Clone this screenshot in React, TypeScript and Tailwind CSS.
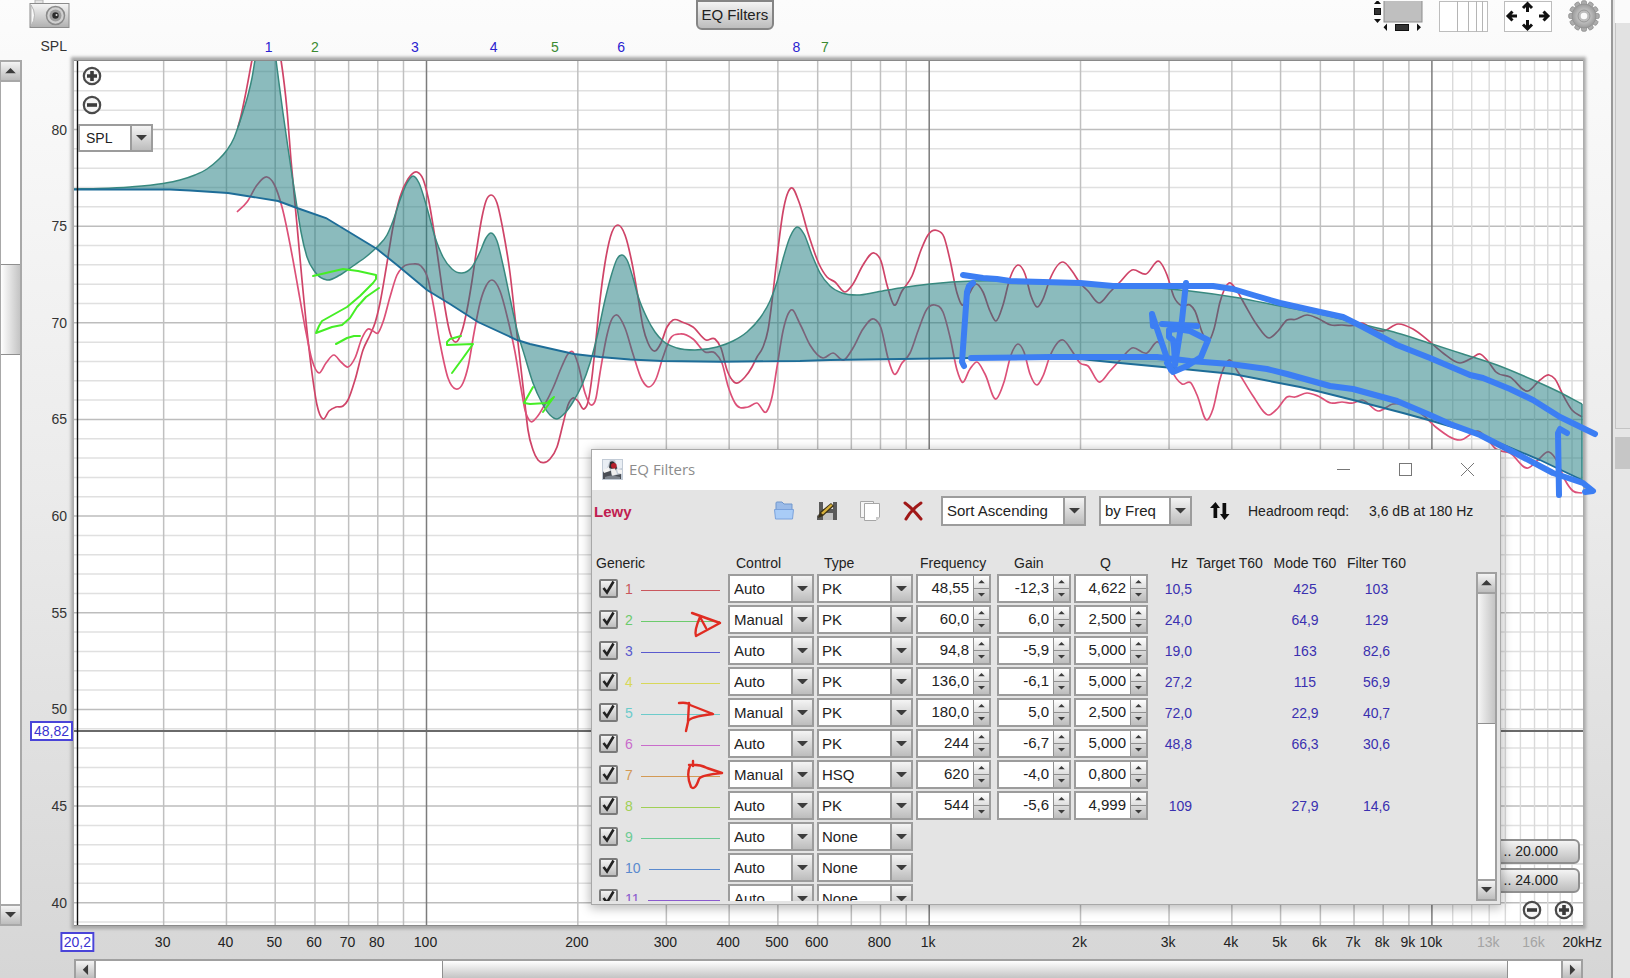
import type { ReactNode } from 'react';

// Plot area in drawing units; every trace below is listed in the same units.
const PLOT = { x: 74, y: 60, w: 1509, h: 866 };
const VIEW_BOX = `${PLOT.x} ${PLOT.y} ${PLOT.w} ${PLOT.h}`;

const freqX = (f: number) => 426.5 + 502.7 * (Math.log10(f) - 2);
const splY = (v: number) => 129.5 + (80 - v) * 19.33;
const leftPct = (f: number) => `${((freqX(f) - PLOT.x) / PLOT.w) * 100}%`;
const topPct = (v: number) => `${((splY(v) - PLOT.y) / PLOT.h) * 100}%`;

type Point = [number, number];

const parse = (s: string): Point[] =>
  s.trim().split(/\s+/).map((p) => p.split(',').map(Number) as Point);

// Cubic curve through points with rising x, with parabolic tangents
function trace(points: Point[]) {
  const slope = points.slice(1).map((p, i) => (p[1] - points[i][1]) / (p[0] - points[i][0]));
  const tangent = points.map((p, i) => {
    if (i === 0) return slope[0];
    if (i === points.length - 1) return slope[i - 1];
    const before = p[0] - points[i - 1][0];
    const after = points[i + 1][0] - p[0];
    return (after * slope[i - 1] + before * slope[i]) / (before + after);
  });
  let d = `M${points[0][0]} ${points[0][1]}`;
  for (let i = 1; i < points.length; i++) {
    const [x0, y0] = points[i - 1];
    const [x1, y1] = points[i];
    const third = (x1 - x0) / 3;
    d += `C${x0 + third} ${y0 + third * tangent[i - 1]} ${x1 - third} ${y1 - third * tangent[i]} ${x1} ${y1}`;
  }
  return d;
}

const response = parse(`
  74,189 100,188.5 130,187 163,183.5 180,180 195,175 207,169 218,160 227,150 234,138 238,127 243,112 248,95 252,78
  255,60 260,35 267,20 273,40 276,60 279,83 283,113 288,148 292,175 297,207 301,232 307,257 315,272 327,280 340,275
  353,266 367,256 377,247 387,235 393,221 400,200 407,183 413,176 419,183 427,208 435,237 443,257 452,269 462,273
  472,267 480,252 486,238 491,233 497,241 503,265 510,298 517,330 525,357 533,383 542,403 550,415 557,419 565,413
  573,402 582,385 590,363 597,337 605,300 612,273 617,259 622,255 627,260 633,278 638,296 647,318 655,332 663,341
  677,348 695,350 717,347 733,341 747,332 760,318 770,301 777,282 783,259 790,237 797,227 804,234 812,255 820,273
  830,286 842,293 857,295 877,292 900,288 930,284 973,281 1010,281 1080,283 1130,286 1190,291 1233,297 1280,306
  1320,314 1373,327 1397,333 1432,344 1463,354 1497,365 1533,380 1557,391 1582,404`);

const target = parse(`
  74,189.5 120,189.5 170,189.5 190,190.5 228,193 250,196.5 278,201 297,208 326,218 377,249 397,265 427,290 450,304
  478,322 517,340 530,344 574,354 600,357 630,359.5 662,361 720,361.7 800,361 830,360 900,359 973,358 1030,358
  1080,359 1120,363 1173,368 1233,374 1300,387 1317,391 1353,400 1403,413 1432,421 1480,435 1540,460 1582,480`);

const measured = parse(`
  238,127 240,120 245,97 252,60 257,35 266,15 276,35 281,60 287,110 291,160 297,225 302,280 308,340 312,373 317,405
  323,419 329,411 336,407 343,406 348,400 355,380 363,350 370,335 375,323 380,303 387,263 393,227 400,197 408,179
  417,172 423,179 428,197 435,238 440,273 445,308 450,333 456,342 462,331 467,310 472,281 477,247 482,217 486,201
  491,195 497,203 503,230 510,273 515,317 520,360 524,395 528,430 533,450 538,460 543,462.7 550,459 557,447 563,424
  568,405 573,398 578,401 584,409 588,402 592,377 595,349 600,300 605,263 612,232 618,225 625,235 632,263 638,297
  643,327 648,343 655,351 661,343 667,327 673,320 682,322 693,327 706,340 715,339 721,348 727,370 734,382 745,377
  752,367 757,357 763,347 768,330 773,293 778,249 783,212 791,188 799,202 808,233 819,264 827,277 835,282 845,292
  853,284 863,265 874,253 881,261 887,285 894,305 902,291 912,276 921,250 928,235 937,230.500 944,237 950,260 957,293
  962,305 968,296 976,284 983,292 990,311 996,321 1003,305 1010,278 1018,265 1025,274 1031,296 1037,307 1043,299
  1050,279 1063,262 1072,271 1080,283 1088,291 1099,303 1110,292 1120,282 1132,270 1146,274 1160,262 1167,275
  1174,297 1182,306 1190,305 1195,311 1202,332 1208,342 1214,329 1220,302 1229,283 1237,291 1245,305 1257,325
  1269,338 1278,331 1287,320 1295,319.500 1307,315 1318,318.500 1331,325 1342,325 1353,325.500 1362,323 1373,329 1383,331
  1398,324 1413,329 1430,342 1443,353 1460,363 1472,358 1480,354 1487,360 1496,372 1510,377 1528,391 1540,380
  1549,375 1555,379 1563,395 1572,410 1582,417`);

const predicted = parse(`
  237,212 247,202 257,185 267,177 274,184 282,207 293,260 298,288 305,327 312,360 319,373 326,363 334,355 341,362
  348,367 355,358 362,338 368,329 373,331 378,333 383,322 390,297 397,275 403,267 413,264 421,266 428,279 433,303
  440,343 448,378 456,389 463,383 468,367 474,333 480,303 486,286 492,280 500,291 508,320 515,352 521,388 525,410
  530,421 537,417 545,404 553,388 562,366 568,354 573,352 578,364 585,393 591,405 596,398 600,373 607,335 611,321
  616,315 625,328 633,354 642,380 649,387 656,379 663,357 670,339 680,334 693,339 705,352 715,353 722,363 728,386
  735,403 748,407 757,403 767,411 772,397 777,367 783,331 791,310 800,324 810,345 823,358 833,353 844,360 853,348
  863,329 874,319 881,328 888,358 894,374 902,363 910,353 918,331 927,309 935,305 943,312 950,337 957,370 962,382
  970,369 977,362 985,374 996,399 1004,382 1011,355 1018,344 1024,352 1030,374 1037,385 1043,376 1050,356 1063,340
  1072,351 1080,363 1088,366 1099,382 1110,371 1120,360 1132,348 1147,353 1158,342 1163,347 1171,369 1182,384
  1191,383 1197,395 1207,420 1213,409 1220,379 1229,360 1238,372 1253,396 1269,415 1278,408 1287,397 1295,397
  1307,393 1318,396 1331,403 1342,402 1353,403 1362,400 1378,411 1393,404 1410,407 1423,415 1437,428 1460,440
  1480,432 1488,440 1496,449 1510,453 1528,468 1538,460 1549,452 1557,461 1565,480 1573,491 1582,493`);

const greenMarks = [
  '313,276 343,269 358,271 376,275 376,279 373,283 360,296 347,307 322,321 319,326 316,333 332,327 342,325 350,318 357,307 366,297 379,288',
  '336,344 347,338 354,336 360,336',
  '461,336 450,339 447,342 447,345 473,344 463,358 452,373',
  '533,387 524,403 530,404 547,403 554,397 543,412',
];

const blueMarks = [
  '963,275 983,278 997,279 1010,281 1080,283 1113,286 1213,286 1233,289 1253,295 1280,303 1320,312 1343,317 1363,327 1380,336 1397,345 1430,358 1470,375 1483,378 1510,389 1533,400 1560,417 1595,434',
  '971,358 1050,357 1157,357 1190,361 1230,364 1267,369 1287,374 1330,386 1353,389 1397,401 1430,415 1450,424 1480,435 1517,454 1553,473 1583,483 1593,491 1585,492',
  '973,283 969,286 967,292 962,362 964,366',
  '1567,433 1560,429 1558,433 1559,495',
  '1186,283 1182,320 1175,365',
  '1152,314 1153,326 M1152,314 1171,370',
  '1162,324 1197,326',
  '1175,362 1174,347 1173,340 1169,337 1169,330 1177,329 1190,331 1208,340 1201,357 1187,366 1173,372 1167,363',
];

// marks drawn over the filter window, relative to its top left corner
const redMarks = [
  'M101 164 L129 174 L105 187 Q103 182 109 168 L115 179',
  'M88 254 Q97 253 99 256 L122 265 Q97 268 97 273 L95 282 M98 254 L97 272',
  'M102 312 L102 317 M98 316 Q108 315 116 319 L131 324 Q110 326 108 330 Q104 342 100 338 Q95 326 99 317',
];

const freqLabels: [number, string][] = [
  [30, '30'], [40, '40'], [50, '50'], [60, '60'], [70, '70'], [80, '80'], [100, '100'], [200, '200'],
  [300, '300'], [400, '400'], [500, '500'], [600, '600'], [800, '800'], [1000, '1k'], [2000, '2k'],
  [3000, '3k'], [4000, '4k'], [5000, '5k'], [6000, '6k'], [7000, '7k'], [8000, '8k'], [9000, '9k'],
  [10000, '10k'], [13000, '13k'], [16000, '16k'], [20000, '20kHz'],
];
const splLabels = [80, 75, 70, 65, 60, 55, 50, 45, 40];

const decades = [10, 100, 1000];
const gridFreqs = decades
  .flatMap((d) => [2, 3, 4, 5, 6, 7, 8, 9, 10].map((n) => n * d))
  .filter((f) => f > 20.2);
const fineFreqs = [11, 12, 13, 14, 15, 16, 17, 18, 19].map((n) => n * 1000);
const gridSpls = Array.from({ length: 45 }, (_, i) => 39 + i);

const filters = [
  { n: 1, color: '#c9575d', control: 'Auto', type: 'PK', freq: '48,55', gain: '-12,3', q: '4,622', hz: '10,5', mode: '425', t60: '103' },
  { n: 2, color: '#6ccb6c', control: 'Manual', type: 'PK', freq: '60,0', gain: '6,0', q: '2,500', hz: '24,0', mode: '64,9', t60: '129' },
  { n: 3, color: '#5a5ace', control: 'Auto', type: 'PK', freq: '94,8', gain: '-5,9', q: '5,000', hz: '19,0', mode: '163', t60: '82,6' },
  { n: 4, color: '#d8d85a', control: 'Auto', type: 'PK', freq: '136,0', gain: '-6,1', q: '5,000', hz: '27,2', mode: '115', t60: '56,9' },
  { n: 5, color: '#6ccbcb', control: 'Manual', type: 'PK', freq: '180,0', gain: '5,0', q: '2,500', hz: '72,0', mode: '22,9', t60: '40,7' },
  { n: 6, color: '#c96ccb', control: 'Auto', type: 'PK', freq: '244', gain: '-6,7', q: '5,000', hz: '48,8', mode: '66,3', t60: '30,6' },
  { n: 7, color: '#d39a55', control: 'Manual', type: 'HSQ', freq: '620', gain: '-4,0', q: '0,800', hz: '', mode: '', t60: '' },
  { n: 8, color: '#a0d055', control: 'Auto', type: 'PK', freq: '544', gain: '-5,6', q: '4,999', hz: '109', mode: '27,9', t60: '14,6' },
  { n: 9, color: '#6ccb94', control: 'Auto', type: 'None' },
  { n: 10, color: '#5a8ace', control: 'Auto', type: 'None' },
  { n: 11, color: '#8a5ace', control: 'Auto', type: 'None' },
];

const filterMarkers = [
  { n: 1, f: 48.55, manual: false },
  { n: 2, f: 60, manual: true },
  { n: 3, f: 94.8, manual: false },
  { n: 4, f: 136, manual: false },
  { n: 5, f: 180, manual: true },
  { n: 6, f: 244, manual: false },
  { n: 8, f: 544, manual: false },
  { n: 7, f: 620, manual: true },
];

const buttonFace = 'bg-gradient-to-b from-[#f4f4f4] to-[#bdbdbd]';

function Triangle({ dir, small }: { dir: 'up' | 'down' | 'left' | 'right'; small?: boolean }) {
  const turn = { up: 'rotate-180', down: '', left: 'rotate-90', right: '-rotate-90' }[dir];
  return (
    <svg viewBox="0 0 12 6" className={`${small ? 'w-[7px]' : 'w-[11px]'} ${turn}`} aria-hidden>
      <path d="M0 0H12L6 6Z" fill="#3c3c3c" />
    </svg>
  );
}

function Combo({ label, value, className, textClass = 'pl-1' }: {
  label: string;
  value: string;
  className: string;
  textClass?: string;
}) {
  return (
    <div className={`flex border-2 border-[#9c9c9c] bg-white ${className}`}>
      <select
        aria-label={label}
        className={`min-w-0 flex-1 appearance-none bg-white text-[#222] outline-none ${textClass}`}
        defaultValue={value}
      >
        <option>{value}</option>
      </select>
      <span className={`pointer-events-none flex w-[21px] shrink-0 items-center justify-center border-l-2 border-[#9c9c9c] ${buttonFace}`}>
        <Triangle dir="down" />
      </span>
    </div>
  );
}

function Spinner({ label, value, className }: { label: string; value: string; className: string }) {
  return (
    <div className={`flex h-[29px] border-2 border-[#9c9c9c] bg-white ${className}`}>
      <input
        aria-label={label}
        defaultValue={value}
        className="min-w-0 flex-1 bg-white pr-1 text-right text-[15px] text-[#222] outline-none"
      />
      <div className="flex w-4 shrink-0 flex-col border-l border-[#8f8f8f]">
        <button aria-label={`Increase ${label}`} className="flex flex-1 items-center justify-center border-b border-[#8f8f8f] bg-gradient-to-b from-white to-[#dedede]">
          <Triangle dir="up" small />
        </button>
        <button aria-label={`Decrease ${label}`} className="flex flex-1 items-center justify-center bg-gradient-to-b from-[#dadada] to-[#bdbdbd]">
          <Triangle dir="down" small />
        </button>
      </div>
    </div>
  );
}

function ZoomButton({ label, plus }: { label: string; plus?: boolean }) {
  return (
    <button aria-label={label} className="block">
      <svg viewBox="0 0 20 20" className="size-5">
        <circle cx="10" cy="10" r="8.2" fill="#f4f4f4" stroke="#4a4a4a" strokeWidth="2.2" />
        <path d={plus ? 'M5 10H15M10 5V15' : 'M5 10H15'} stroke="#3a3a3a" strokeWidth="3.6" />
      </svg>
    </button>
  );
}

function IconButton({ label, className = '', children }: { label: string; className?: string; children: ReactNode }) {
  return (
    <button aria-label={label} className={`block shrink-0 ${className}`}>
      {children}
    </button>
  );
}

function CameraIcon() {
  return (
    <svg viewBox="0 0 42 29" className="h-[29px] w-[42px]">
      <defs>
        <linearGradient id="camBody" x1="0" y1="0" x2="0" y2="1">
          <stop offset="0" stopColor="#f6f6f6" />
          <stop offset="1" stopColor="#b0b0b0" />
        </linearGradient>
      </defs>
      <path d="M6 3V0H14V3" fill="#e4e4e4" stroke="#b4b4b4" />
      <rect x="1" y="3.5" width="39" height="24" fill="url(#camBody)" stroke="#8c8c8c" />
      <path d="M2 5Q9 15 2 26Z" fill="#f8f8f8" stroke="#b5b5b5" />
      <circle cx="26.5" cy="15.5" r="9" fill="#d0d0d0" stroke="#8a8a8a" strokeWidth="1.5" />
      <circle cx="26.5" cy="15.5" r="6" fill="#9c9c9c" />
      <circle cx="26.5" cy="15.5" r="3.2" fill="#2c2c2c" />
      <circle cx="27.5" cy="15" r="1" fill="#ddd" />
    </svg>
  );
}

function ScrollbarsIcon() {
  return (
    <svg viewBox="0 0 50 31" className="h-[31px] w-[50px]">
      <rect x="11" y="-2" width="38" height="23" fill="#bfbfbf" stroke="#8c8c8c" />
      <path d="M1 3L4.5 -1L8 3ZM1 18H8L4.5 22Z" fill="#111" />
      <rect x="1.5" y="7.5" width="6" height="6" fill="#333" stroke="#111" />
      <path d="M14 22.5V30L10.5 26.3ZM44 22.5V30L48 26.3Z" fill="#111" />
      <rect x="22.5" y="23.5" width="13" height="6" fill="#333" stroke="#111" />
    </svg>
  );
}

function AxisIcon() {
  return (
    <svg viewBox="0 0 49 31" className="h-[31px] w-[49px]">
      <rect x=".5" y=".5" width="48" height="30" fill="#fff" stroke="#bdbdbd" />
      <path d="M18.5 0V31M29.5 0V31M37.5 0V31M43.5 0V31" stroke="#b5b5b5" />
    </svg>
  );
}

function MoveIcon() {
  return (
    <svg viewBox="0 0 48 31" className="h-[31px] w-[48px]">
      <rect x=".5" y=".5" width="47" height="30" fill="#fff" stroke="#bdbdbd" />
      <path
        d="M23.500 11V3M19 7L23.500 2.500L28 7M23.500 19V27M19 23.500L23.500 28L28 23.500M13 15H4M8.500 10.500L4 15L8.500 19.500M35 15H44M39.500 10.500L44 15L39.500 19.500"
        fill="none"
        stroke="#111"
        strokeWidth="3"
      />
    </svg>
  );
}

function GearIcon() {
  return (
    <svg viewBox="-16 -16 32 32" className="size-8">
      <defs>
        <radialGradient id="gearFace">
          <stop offset="0" stopColor="#e6e6e6" />
          <stop offset="1" stopColor="#9a9a9a" />
        </radialGradient>
      </defs>
      {Array.from({ length: 12 }, (_, i) => (
        <rect key={i} x="-2.5" y="-15.3" width="5" height="6" rx="1.5" fill="#acacac" stroke="#868686" strokeWidth=".7" transform={`rotate(${i * 30})`} />
      ))}
      <circle r="12" fill="url(#gearFace)" stroke="#929292" strokeWidth=".8" />
      <circle r="6" fill="#bcbcbc" stroke="#979797" />
      <circle r="3.3" fill="#fafafa" />
    </svg>
  );
}

function Plot() {
  const area = `${trace(response)}L${[...target].reverse().join('L')}Z`;
  return (
    <svg viewBox={VIEW_BOX} preserveAspectRatio="none" className="absolute inset-0 size-full" aria-label="SPL plot">
      {gridSpls.map((v) => (
        <path key={v} d={`M74 ${splY(v)}H1583`} stroke={v % 5 ? '#e0e0e0' : '#bdbdbd'} strokeWidth="1.5" />
      ))}
      {fineFreqs.map((f) => (
        <path key={f} d={`M${freqX(f)} 60V926`} stroke="#dadada" strokeWidth="1.4" />
      ))}
      {gridFreqs.map((f) => {
        const major = f === 100 || f === 1000 || f === 10000;
        return <path key={f} d={`M${freqX(f)} 60V926`} stroke={major ? '#7c7c7c' : '#c0c0c0'} strokeWidth="1.5" />;
      })}
      <path d={trace(measured)} fill="none" stroke="#cf4468" strokeWidth="1.7" />
      <path d={trace(predicted)} fill="none" stroke="#dc5078" strokeWidth="1.7" />
      <path d={area} fill="#17777b" fillOpacity=".5" />
      <path d={trace(response)} fill="none" stroke="#38897f" strokeWidth="1.5" />
      <path d={`M${target.join('L')}`} fill="none" stroke="#1e6d98" strokeWidth="1.9" />
      <path d="M1582 404V480" stroke="#2f8583" strokeWidth="1.5" />
      <path d="M72 731H1583" stroke="#6a6a6a" strokeWidth="2" />
      <path d="M77.5 60V926" stroke="#111" strokeWidth="1.4" />
      <path d="M74 60H1583M74 926H1583" stroke="#8a8a8a" strokeWidth="2" />
    </svg>
  );
}

function Marks() {
  return (
    <svg
      viewBox={VIEW_BOX}
      preserveAspectRatio="none"
      className="pointer-events-none absolute inset-0 size-full overflow-visible"
      fill="none"
      strokeLinecap="round"
      strokeLinejoin="round"
      aria-hidden
    >
      {greenMarks.map((m) => (
        <path key={m} d={`M${m}`} stroke="#45ee25" strokeWidth="2" />
      ))}
      {blueMarks.map((m) => (
        <path key={m} d={`M${m}`} stroke="#3c7ef3" strokeWidth="6" />
      ))}
    </svg>
  );
}

function FilterRow({ f }: { f: (typeof filters)[number] }) {
  return (
    <tr className="h-[31px] align-top text-[14px] text-[#3a30b0]">
      <td className="p-0">
        <label className="flex h-[29px] items-center pr-2 pl-[7px]" style={{ color: f.color }}>
          <span className="grid">
            <input
              type="checkbox"
              defaultChecked
              className={`col-start-1 row-start-1 size-[19px] appearance-none rounded-[2px] border-2 border-[#7a7a7a] ${buttonFace}`}
            />
            <svg viewBox="0 0 19 19" className="pointer-events-none col-start-1 row-start-1 size-[19px]" aria-hidden>
              <path d="M4.5 9L8 13.5L14.5 2.5" fill="none" stroke="#222" strokeWidth="2.6" />
            </svg>
          </span>
          <span className="pt-[2px] pl-[7px]">{f.n}</span>
          <span className="mt-[3px] ml-2 h-px flex-1" style={{ background: f.color }} />
        </label>
      </td>
      <td className="p-0">
        <Combo label={`Filter ${f.n} control`} value={f.control} className="h-[29px] w-[86px] text-[15px]" textClass="pt-[2px] pl-1" />
      </td>
      <td className="p-0">
        <Combo label={`Filter ${f.n} type`} value={f.type} className="h-[29px] w-[96px] text-[15px]" textClass="pt-[2px] pl-[3px]" />
      </td>
      <td className="p-0">
        {f.freq && <Spinner label={`filter ${f.n} frequency`} value={f.freq} className="w-[75px]" />}
      </td>
      <td className="p-0">
        {f.gain && <Spinner label={`filter ${f.n} gain`} value={f.gain} className="w-[74px]" />}
      </td>
      <td className="p-0">
        {f.q && <Spinner label={`filter ${f.n} Q`} value={f.q} className="w-[74px]" />}
      </td>
      <td className="p-0 pt-[5px] text-right">{f.hz}</td>
      <td className="p-0" />
      <td className="p-0 pt-[5px] text-center">{f.mode}</td>
      <td className="p-0 pt-[5px] text-center">{f.t60}</td>
    </tr>
  );
}

function FilterWindow() {
  return (
    <section
      aria-label="EQ Filters"
      className="absolute top-[449px] left-[591px] flex h-[456px] w-[910px] flex-col border border-[#a8a8a8] bg-[#e4e4e4] shadow-[0_2px_10px_1px_rgba(0,0,0,0.28)]"
    >
      <header className="flex h-10 shrink-0 items-center bg-white pb-px pl-[10px]">
        <svg viewBox="0 0 21 21" className="size-[21px]" aria-hidden>
          <rect width="21" height="21" fill="#c2cbd6" />
          <path d="M1 1H8L5 9L1 12ZM13 1H20V9L16 10Z" fill="#e9eef4" />
          <path d="M8 3Q11 1 13 4L15 9L12 14L10 10L7 9Z" fill="#2b2b2f" />
          <path d="M1 13Q5 10 9 12L10 17L19 15V20H1Z" fill="#4a4e55" />
          <path d="M9 10L13 9L15 15L10 17Z" fill="#efefef" />
          <path d="M1 11L7 8L8 12L2 14ZM15 10L20 11V15L16 14Z" fill="#f4f4f4" />
          <circle cx="11.8" cy="6.8" r="2.8" fill="#b5202c" />
          <path d="M3 18Q9 15 18 18V20H3Z" fill="#7b828b" />
        </svg>
        <h2 className="flex-1 pl-[6px] font-['Open_Sans',sans-serif] text-[15px] text-[#8c8c8c]">EQ Filters</h2>
        <div className="flex gap-[45px] pr-6">
          <IconButton label="Minimize">
            <svg viewBox="0 0 17 17" className="size-[17px]"><path d="M2 8.5H15" stroke="#777" /></svg>
          </IconButton>
          <IconButton label="Maximize">
            <svg viewBox="0 0 17 17" className="size-[17px]"><rect x="2.5" y="2.5" width="12" height="12" fill="none" stroke="#777" /></svg>
          </IconButton>
          <IconButton label="Close">
            <svg viewBox="0 0 17 17" className="size-[17px]"><path d="M2 2L15 15M15 2L2 15" stroke="#777" /></svg>
          </IconButton>
        </div>
      </header>

      <div className="flex h-[60px] shrink-0 items-start pt-[6px] text-[15px] text-[#222]">
        <strong className="w-[181px] pt-[5px] pl-[2px] text-[#c02050]">Lewy</strong>
        <div className="flex w-[168px] gap-[21px] pt-1">
          <IconButton label="Open">
            <svg viewBox="0 0 22 22" className="size-[22px]">
              <path d="M3 9V3Q3 2 4 2H9L11 4H19V9" fill="#9bbbe8" stroke="#7197cc" />
              <path d="M1.5 9.5H20.5L19.5 19H2.5Z" fill="#a9ccf7" stroke="#7aa2dc" />
            </svg>
          </IconButton>
          <IconButton label="Save">
            <svg viewBox="0 0 22 22" className="size-[22px]">
              <path d="M3 2H21V20H1V16L3 14Z" fill="#5a5a5a" />
              <path d="M7 2H17V9H7Z" fill="#e6e6e6" />
              <path d="M7 13H17V20H7Z" fill="#c2c2c2" />
              <path d="M2 18L4 12L15 3L18 6L7 16Z" fill="#3a3016" />
              <path d="M5 13L15 4L16.5 5.5L7 14.5Z" fill="#d8b23c" />
            </svg>
          </IconButton>
          <IconButton label="Copy">
            <svg viewBox="0 0 22 22" className="size-[22px]">
              <path d="M1.5 1.5H14.5V17.5H1.5Z" fill="#f6f6f6" stroke="#a6a6a6" />
              <path d="M5.5 3.5H20.5V17L17 20.5H5.5Z" fill="#fff" stroke="#a6a6a6" />
              <path d="M20 17H17V20Z" fill="#c8c8c8" />
            </svg>
          </IconButton>
          <IconButton label="Delete">
            <svg viewBox="0 0 22 22" className="size-[22px]">
              <path d="M3 3Q11 9 19 19M19 3Q9 10 4 19" fill="none" stroke="#a01818" strokeWidth="3" strokeLinecap="round" />
            </svg>
          </IconButton>
        </div>
        <Combo label="Sort order" value="Sort Ascending" className="h-[30px] w-[145px]" />
        <Combo label="Sort by" value="by Freq" className="ml-[13px] h-[30px] w-[93px]" />
        <IconButton label="Apply sort" className="ml-[18px] pt-[5px]">
          <svg viewBox="0 0 20 20" className="size-5">
            <path d="M0 7L5.5 1L10 7H7.2V17H3.5V7ZM10 13H12.5V2H16.2V13H19.5L14.5 19Z" fill="#0c0c0c" />
          </svg>
        </IconButton>
        <span className="ml-[18px] w-[121px] pt-[5px] text-[14px]">Headroom reqd:</span>
        <span className="pt-[5px] text-[14px]">3,6 dB at 180 Hz</span>
      </div>

      <div className="flex min-h-0 flex-1 overflow-hidden pb-[3px]">
        <div className="min-w-0 flex-1 overflow-hidden">
          <table className="w-[818px] table-fixed border-collapse text-left">
            <colgroup>
              <col className="w-[136px]" />
              <col className="w-[89px]" />
              <col className="w-[99px]" />
              <col className="w-[81px]" />
              <col className="w-[77px]" />
              <col className="w-[76px]" />
              <col className="w-[42px]" />
              <col className="w-[75px]" />
              <col className="w-[76px]" />
              <col className="w-[67px]" />
            </colgroup>
            <thead>
              <tr className="h-6 text-[14px] whitespace-nowrap text-[#222]">
                <th className="p-0 pt-[2px] pl-1 font-normal">Generic</th>
                <th className="p-0 pt-[2px] pl-2 font-normal">Control</th>
                <th className="p-0 pt-[2px] pl-[7px] font-normal">Type</th>
                <th className="p-0 pt-[2px] pl-1 font-normal">Frequency</th>
                <th className="p-0 pt-[2px] pl-[17px] font-normal">Gain</th>
                <th className="p-0 pt-[2px] pl-[26px] font-normal">Q</th>
                <th className="p-0 pt-[2px] pr-1 text-right font-normal">Hz</th>
                <th className="p-0 pt-[2px] text-center font-normal">Target T60</th>
                <th className="p-0 pt-[2px] text-center font-normal">Mode T60</th>
                <th className="p-0 pt-[2px] text-center font-normal">Filter T60</th>
              </tr>
            </thead>
            <tbody>
              {filters.map((f) => (
                <FilterRow key={f.n} f={f} />
              ))}
            </tbody>
          </table>
        </div>
        <div className="mt-[22px] mr-[3px] flex w-[21px] flex-col border-2 border-[#a0a0a0] bg-white">
          <button aria-label="Scroll up" className={`flex h-5 items-center justify-center border-b-2 border-[#a0a0a0] ${buttonFace}`}>
            <Triangle dir="up" />
          </button>
          <div className="h-[130px] border-b border-[#8f8f8f] bg-gradient-to-r from-[#f6f6f6] to-[#c4c4c4]" />
          <button aria-label="Scroll down" className={`mt-auto flex h-5 items-center justify-center border-t-2 border-[#a0a0a0] ${buttonFace}`}>
            <Triangle dir="down" />
          </button>
        </div>
      </div>

      <svg viewBox="0 0 910 456" className="pointer-events-none absolute -top-px -left-px h-[456px] w-[910px]" fill="none" stroke="#e02c22" strokeWidth="2.4" strokeLinecap="round" strokeLinejoin="round" aria-hidden>
        {redMarks.map((d) => (
          <path key={d} d={d} />
        ))}
      </svg>
    </section>
  );
}

export default function App() {
  return (
    <div className="flex min-h-screen overflow-hidden bg-[#e4e4e4] font-['Liberation_Sans',Arial,sans-serif] text-[14px] text-[#333]">
      <main className="relative grid flex-1 grid-cols-[22px_52px_minmax(0,1fr)_28px] grid-rows-[36px_24px_minmax(400px,1fr)_33px_19px] bg-gradient-to-b from-[#fcfcfc] via-[#ebebeb] to-[#d6d6d6]">
        <div className="col-span-4 flex items-start pl-[29px]">
          <IconButton label="Capture graph">
            <CameraIcon />
          </IconButton>
          <button className={`ml-[39.5%] h-[30px] w-[78px] rounded-b-md border-2 border-[#858585] text-[15px] whitespace-nowrap text-[#222] ${buttonFace}`}>
            EQ Filters
          </button>
          <div className="ml-auto flex pr-[11px]">
            <IconButton label="Scrollbars" className="mr-4"><ScrollbarsIcon /></IconButton>
            <IconButton label="Frequency axis" className="mr-4"><AxisIcon /></IconButton>
            <IconButton label="Move graph" className="mr-4"><MoveIcon /></IconButton>
            <IconButton label="Graph controls"><GearIcon /></IconButton>
          </div>
        </div>

        <div className="col-span-2 pr-[7px] text-right leading-5">SPL</div>
        <div className="relative col-span-2 mr-7">
          {filterMarkers.map((m) => (
            <span
              key={m.n}
              className={`absolute -translate-x-1/2 leading-[22px] ${m.manual ? 'text-[#3a8a30]' : 'text-[#2a22d0]'}`}
              style={{ left: leftPct(m.f) }}
            >
              {m.n}
            </span>
          ))}
        </div>

        {/* level scrollbar */}
        <div className="flex flex-col border-2 border-l border-[#a8a8a8] bg-white">
          <button aria-label="Scroll up" className={`flex h-5 shrink-0 items-center justify-center border-b-2 border-[#a8a8a8] ${buttonFace}`}>
            <Triangle dir="up" />
          </button>
          <div className="flex flex-1 flex-col">
            <div className="flex-[182]" />
            <div className="flex-[90] border-y border-[#8f8f8f] bg-gradient-to-r from-white to-[#c4c4c4]" />
            <div className="flex-[550]" />
          </div>
          <button aria-label="Scroll down" className={`flex h-5 shrink-0 items-center justify-center border-t-2 border-[#a8a8a8] ${buttonFace}`}>
            <Triangle dir="down" />
          </button>
        </div>

        <div className="relative">
          {splLabels.map((v) => (
            <span key={v} className="absolute right-[7px] -translate-y-1/2" style={{ top: topPct(v) }}>
              {v}
            </span>
          ))}
        </div>

        <div className="relative bg-white shadow-[0_0_3px_3px_#a8a8a8]">
          <Plot />
          <div className="relative flex flex-col items-start gap-[9px] pt-[6px] pl-1">
            <div className="flex flex-col gap-[9px] pl-1">
              <ZoomButton label="Zoom in level" plus />
              <ZoomButton label="Zoom out level" />
            </div>
            <Combo label="Graph axis" value="SPL" className="h-[28px] w-[75px]" textClass="pl-[6px]" />
          </div>
          <div className="absolute right-[3px] bottom-[6px] flex flex-col items-end gap-1">
            <button className={`h-[25px] w-[100px] rounded-md border-2 border-[#8f8f8f] pr-5 text-right text-[#222] ${buttonFace}`}>.. 20.000</button>
            <button className={`h-[25px] w-[100px] rounded-md border-2 border-[#8f8f8f] pr-5 text-right text-[#222] ${buttonFace}`}>.. 24.000</button>
            <div className="flex gap-3 pt-[3px] pr-[6px]">
              <ZoomButton label="Zoom out frequency" />
              <ZoomButton label="Zoom in frequency" plus />
            </div>
          </div>
          <Marks />
          <output
            className="absolute right-full mr-px -translate-y-1/2 border-2 border-[#4a44d8] bg-white px-[2px] leading-4 text-[#3a32d0]"
            style={{ top: topPct(48.88) }}
          >
            48,82
          </output>
        </div>
        <div />

        <div className="relative col-start-3">
          <output
            className="absolute top-[6px] -translate-x-1/2 border-2 border-[#4a44d8] bg-white px-px leading-4 text-[#3a32d0]"
            style={{ left: leftPct(20.2) }}
          >
            20,2
          </output>
          {freqLabels.map(([f, text]) => (
            <span
              key={f}
              className={`absolute top-[6px] -ml-px -translate-x-1/2 leading-5 ${f === 13000 || f === 16000 ? 'text-[#a4a4a4]' : 'text-[#222]'}`}
              style={{ left: leftPct(f) }}
            >
              {text}
            </span>
          ))}
        </div>

        {/* frequency scrollbar */}
        <div className="col-start-3 row-start-5 flex border-2 border-b-0 border-[#a0a0a0] bg-white">
          <button aria-label="Scroll left" className={`flex w-5 shrink-0 items-center justify-center border-r-2 border-[#a0a0a0] ${buttonFace}`}>
            <Triangle dir="left" />
          </button>
          <div className="flex flex-1">
            <div className="flex-[347]" />
            <div className="flex-[1066] border-x border-[#8f8f8f] bg-gradient-to-b from-white to-[#c4c4c4]" />
            <div className="flex-[53]" />
          </div>
          <button aria-label="Scroll right" className={`flex w-5 shrink-0 items-center justify-center border-l-2 border-[#a0a0a0] ${buttonFace}`}>
            <Triangle dir="right" />
          </button>
        </div>

        <FilterWindow />
      </main>

      {/* edge of the neighbouring pane */}
      <aside className="flex w-[19px] shrink-0 flex-col border-l-2 border-[#999] bg-[#e6e6e6] pl-[2px]">
        <div className="h-[23px] bg-[#fafafa]" />
        <div className="h-[406px] border-b border-l border-[#c4c4c4] bg-[#e2e2e2]" />
        <div className="mt-2 h-8 bg-[#c6c6c6]" />
      </aside>
    </div>
  );
}
